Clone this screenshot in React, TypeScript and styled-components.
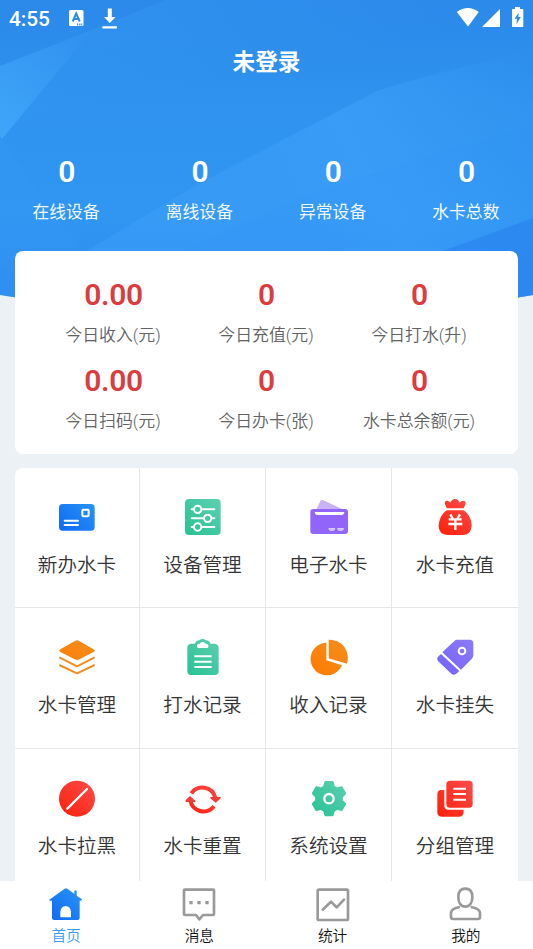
import React from 'react';
import styled, { createGlobalStyle } from 'styled-components';

const GlobalStyle = createGlobalStyle`
  * { box-sizing: border-box; }
  body {
    margin: 0;
    background: #ecf1f5;
    font-family: Roboto, 'Noto Sans CJK SC', sans-serif;
    overflow: hidden;
  }
  svg { display: block; }
`;

const Screen = styled.div`
  position: relative;
  isolation: isolate;
  display: flex;
  flex-direction: column;
  width: 100%;
  height: 949px;
  overflow: hidden;
`;

const HeroArt = styled.svg`
  position: absolute;
  inset: 0 0 auto 0;
  z-index: -1;
  width: 100%;
  height: 310px;
`;

const StatusBar = styled.div`
  display: flex;
  align-items: center;
  flex: none;
  height: 37px;
  padding: 0 9px;
  color: #fff;
`;

const Clock = styled.span`
  width: 60px;
  font-size: 20.8px;
  font-weight: 500;
`;

const StatusGroup = styled.div<{ $end?: boolean }>`
  display: flex;
  margin-left: ${(p) => (p.$end ? 'auto' : '0')};
`;

const Title = styled.h1`
  flex: none;
  margin: 0;
  height: 50px;
  line-height: 52px;
  text-align: center;
  font-size: 22.6px;
  font-weight: 600;
  color: #fff;
`;

const Summary = styled.div`
  display: grid;
  grid-template-columns: repeat(4, 1fr);
  flex: none;
  height: 164px;
  padding-top: 66px;
`;

const Stat = styled.div`
  display: flex;
  flex-direction: column;
  align-items: center;
`;

const StatValue = styled.strong<{ $red?: boolean }>`
  height: 38px;
  line-height: 38px;
  font-size: 30px;
  font-weight: 600;
  letter-spacing: -0.3px;
  color: ${(p) => (p.$red ? '#dc3c3e' : '#fff')};
`;

const StatLabel = styled.span<{ $dark?: boolean }>`
  height: 40px;
  padding-right: 1px;
  line-height: 42px;
  font-size: ${(p) => (p.$dark ? '16.9px' : '16.8px')};
  white-space: nowrap;
  font-weight: ${(p) => (p.$dark ? 350 : 400)};
  color: ${(p) => (p.$dark ? '#626262' : '#f2f8ff')};
`;

const TodayCard = styled.section`
  display: grid;
  grid-template-columns: repeat(3, 153px);
  grid-auto-rows: 86px;
  justify-content: center;
  flex: none;
  height: 203px;
  margin: 0 15px;
  padding-top: 25px;
  border-radius: 8px;
  background: #fff;
`;

const Menu = styled.section`
  display: grid;
  grid-template-columns: 125px 126px 126px 126px;
  grid-auto-rows: 140.3px;
  flex: 1;
  min-height: 0;
  margin: 14px 15px 0;
  border-radius: 8px 8px 0 0;
  background: #fff;
  overflow: hidden;
`;

const MenuItem = styled.div`
  display: flex;
  flex-direction: column;
  align-items: center;
  gap: 15px;
  padding-top: 31px;
  border-right: 1px solid #e6e6e6;
  border-bottom: 1px solid #e6e6e6;
  font-size: 19.6px;
  line-height: 32px;
  font-weight: 350;
  color: #333;
  &:nth-child(4n) { border-right: 0; }
`;

const Glyph = styled.svg`
  width: 36px;
  height: 36px;
  overflow: visible;
`;

const TabBar = styled.nav`
  display: grid;
  grid-template-columns: repeat(4, 1fr);
  flex: none;
  height: 68px;
  background: #fff;
`;

const Tab = styled.div<{ $active?: boolean }>`
  display: flex;
  flex-direction: column;
  align-items: center;
  padding: 6px 1px 0 0;
  font-size: 14.7px;
  line-height: 24px;
  font-weight: 350;
  color: ${(p) => (p.$active ? '#3b9bf5' : '#111')};
`;

const TabGlyph = styled.svg`
  width: 36px;
  height: 37px;
`;

const gear = (() => {
  const pts: string[] = [];
  for (let i = 0; i < 6; i++) {
    const base = (i * 60 - 90) * (Math.PI / 180);
    [[-0.37, 38], [-0.2, 50], [0.2, 50], [0.37, 38]].forEach(([a, r]) => {
      pts.push(`${54 + r * Math.cos(base + a)},${56 + r * Math.sin(base + a)}`);
    });
  }
  return pts.join(' ');
})();

const menu: { label: string; icon: React.ReactNode }[] = [
  {
    label: '新办水卡',
    icon: (
      <>
        <rect x="0" y="15" width="107" height="80" rx="11" fill="url(#blue)" />
        <g fill="none" stroke="#fff" strokeWidth="6" strokeLinecap="round">
          <rect x="70" y="32" width="19" height="20" rx="3" />
          <path d="M17 65H57M17 78H57" />
        </g>
      </>
    ),
  },
  {
    label: '设备管理',
    icon: (
      <>
        <rect x="0" y="0" width="107" height="108" rx="12" fill="url(#green)" />
        <g fill="none" stroke="#fff" strokeWidth="6" strokeLinecap="round">
          <path d="M20 31H26M50 31H88M20 58H56M80 58H88M20 84H26M50 84H88" />
          <circle cx="38" cy="31" r="11" />
          <circle cx="68" cy="58" r="11" />
          <circle cx="38" cy="84" r="11" />
        </g>
      </>
    ),
  },
  {
    label: '电子水卡',
    icon: (
      <>
        <path d="M16 32L28 6Q31 1 37 4L98 32Z" fill="#c9b2fb" />
        <rect x="-2" y="30" width="113" height="75" rx="9" fill="#9165fa" />
        <path d="M11 39H100Q99 48 92 48H19Q12 48 11 39Z" fill="#fff" />
        <path d="M52 87H73Q72 96 67 96H58Q53 96 52 87ZM78 87H99Q98 96 93 96H84Q79 96 78 87Z" fill="#d5c4ff" />
      </>
    ),
  },
  {
    label: '水卡充值',
    icon: (
      <>
        <path d="M29 28L23 12Q24 4 32 5Q37 7 40 11Q44 1 54 0Q64 1 68 11Q72 5 79 5Q87 6 86 14L80 28Z" fill="url(#red)" />
        <path d="M30 34H79C95 44 103 60 104 80Q102 107 77 108H32Q6 107 5 82C6 61 14 44 30 34Z" fill="url(#red)" />
        <path d="M40 46L48 60M69 46L61 60M35 61H74M34 75H76M55 60V93" fill="none" stroke="#fff" strokeWidth="7" />
      </>
    ),
  },
  {
    label: '水卡管理',
    icon: (
      <>
        <path d="M49 5Q54 2 59 5L104 31Q110 35 104 39L61 61Q54 65 47 61L4 39Q-2 35 4 31Z" fill="url(#orange)" />
        <path d="M1 55L54 82L107 55M1 78L54 103L107 78" fill="none" stroke="#f28c22" strokeWidth="6" strokeLinejoin="round" />
      </>
    ),
  },
  {
    label: '打水记录',
    icon: (
      <>
        <path d="M18 14H30Q33 4 43 4Q53-4 63 4Q73 4 76 14H89Q101 15 101 27V96Q101 108 89 108H18Q7 108 7 96V26Q7 15 18 14Z" fill="url(#green)" />
        <path d="M39 27Q34 26 36 18Q37 14 44 14Q53 3 62 14Q69 14 70 19Q72 26 67 27Z" fill="#fff" />
        <path d="M28 52H80M28 68H80M28 84H80" stroke="#fff" strokeWidth="6" />
      </>
    ),
  },
  {
    label: '收入记录',
    icon: (
      <>
        <path d="M46 11A49 49 0 1 0 93 79L46 64Z" fill="url(#orange)" />
        <path d="M53 2A55 55 0 0 1 108 74L53 58Z" fill="url(#orange)" />
      </>
    ),
  },
  {
    label: '水卡挂失',
    icon: (
      <>
        <path d="M60 2H98Q109 2 109 13V49Q109 54 104 60L72 92L16 40L53 5Q56 2 60 2Z" fill="url(#violet)" />
        <path d="M12 45L67 96L57 105Q49 110 43 104L3 66Q-2 59 3 53Z" fill="url(#violet)" />
        <circle cx="75" cy="36" r="10" fill="none" stroke="#fff" strokeWidth="6" />
      </>
    ),
  },
  {
    label: '水卡拉黑',
    icon: (
      <>
        <circle cx="54" cy="56" r="54" fill="url(#red)" />
        <path d="M25 86L84 27" stroke="#fff" strokeWidth="7" strokeLinecap="round" />
      </>
    ),
  },
  {
    label: '水卡重置',
    icon: (
      <>
        <g fill="none" stroke="url(#red)" strokeWidth="12">
          <path d="M19 40A40 40 0 0 1 91 54" />
          <path d="M87 79A40 40 0 0 1 16 60" />
        </g>
        <path d="M76 51H107Q109 54 105 57L92 68L76 55ZM15 48L31 62V66H3Q-1 63 3 59Z" fill="#f43c35" />
      </>
    ),
  },
  {
    label: '系统设置',
    icon: (
      <>
        <polygon points={gear} fill="url(#green)" stroke="url(#green)" strokeWidth="8" strokeLinejoin="round" />
        <circle cx="54" cy="56" r="14" fill="none" stroke="#fff" strokeWidth="7" />
      </>
    ),
  },
  {
    label: '分组管理',
    icon: (
      <>
        <path d="M12 30H22V78Q23 89 34 89H80Q82 109 67 110H14Q1 110 1 97V42Q2 30 12 30Z" fill="url(#red)" />
        <rect x="28" y="2" width="79" height="81" rx="11" fill="url(#red)" />
        <path d="M49 26H87M49 42H87M49 59H87" stroke="#fff" strokeWidth="6" />
      </>
    ),
  },
];

const tabs: { label: string; icon: React.ReactNode }[] = [
  {
    label: '首页',
    icon: (
      <path
        fillRule="evenodd"
        fill="url(#blue)"
        d="M4 36L50 3Q54 0 58 3L79 18V11Q83 5 86 9V24L102 35Q104 39 97 39H95V91Q95 97 89 97H19Q12 97 12 91V39H7Q2 39 4 36ZM37 89H69V72Q67 56 53 55Q39 56 37 72Z"
      />
    ),
  },
  {
    label: '消息',
    icon: (
      <>
        <path d="M12 6H96Q99 6 99 9V79Q99 82 96 82H66L55 95L45 82H12Q9 82 9 79V9Q9 6 12 6Z" fill="none" stroke="#999" strokeWidth="8" strokeLinejoin="round" />
        <path d="M25 40H35V50H25ZM49 40H59V50H49ZM73 40H83V50H73Z" fill="#999" />
      </>
    ),
  },
  {
    label: '统计',
    icon: (
      <g fill="none" stroke="#999" strokeWidth="8" strokeLinejoin="round">
        <rect x="8" y="6" width="91" height="91" rx="4" />
        <path d="M23 66L48 42L65 59L87 36" strokeLinecap="round" />
      </g>
    ),
  },
  {
    label: '我的',
    icon: (
      <g fill="none" stroke="#999" strokeWidth="8" strokeLinejoin="round">
        <path d="M52 3C66 3 73 13 73 28C73 45 65 57 52 57C39 57 31 45 31 28C31 13 38 3 52 3Z" />
        <path d="M36 58C23 60 10 64 9 75V88Q9 94 16 94H89Q96 94 96 88V75C95 64 82 60 68 58" />
      </g>
    ),
  },
];

const summary = ['在线设备', '离线设备', '异常设备', '水卡总数'];
const today = [
  ['0.00', '今日收入(元)'],
  ['0', '今日充值(元)'],
  ['0', '今日打水(升)'],
  ['0.00', '今日扫码(元)'],
  ['0', '今日办卡(张)'],
  ['0', '水卡总余额(元)'],
];

const gradients: [string, string, string][] = [
  ['blue', '#2795f2', '#1068f8'],
  ['green', '#5acfaf', '#2bc295'],
  ['red', '#fd4a49', '#fc220c'],
  ['orange', '#f48d1e', '#ff7c00'],
  ['violet', '#8b78f8', '#7464fa'],
];

function Backdrop() {
  return (
    <HeroArt viewBox="0 0 533 310" preserveAspectRatio="none">
      <defs>
        <linearGradient id="sky" x1="0" y1="0" x2="0" y2="1">
          <stop offset="0" stopColor="#2b89e9" />
          <stop offset=".35" stopColor="#2f93ef" />
          <stop offset=".7" stopColor="#3096f2" />
          <stop offset="1" stopColor="#2e89ee" />
        </linearGradient>
        <linearGradient id="beam" gradientUnits="userSpaceOnUse" x1="533" y1="60" x2="280" y2="190">
          <stop offset="0" stopColor="#41a4fc" stopOpacity="0" />
          <stop offset=".7" stopColor="#41a4fc" stopOpacity=".55" />
          <stop offset="1" stopColor="#41a2fc" stopOpacity=".4" />
        </linearGradient>
        <linearGradient id="flare" gradientUnits="userSpaceOnUse" x1="0" y1="125" x2="80" y2="40">
          <stop offset="0" stopColor="#48b0ff" stopOpacity=".6" />
          <stop offset="1" stopColor="#48a8ff" stopOpacity=".08" />
        </linearGradient>
        <linearGradient id="sheen" gradientUnits="userSpaceOnUse" x1="90" y1="30" x2="110" y2="110">
          <stop offset="0" stopColor="#3aa0f8" stopOpacity=".25" />
          <stop offset="1" stopColor="#3aa0f8" stopOpacity="0" />
        </linearGradient>
        <clipPath id="heroShape">
          <path d="M0 0H533V295Q267 340 0 295Z" />
        </clipPath>
        {gradients.map(([id, from, to]) => (
          <linearGradient key={id} id={id} gradientUnits="userSpaceOnUse" x1="100" y1="5" x2="8" y2="102">
            <stop offset="0" stopColor={from} />
            <stop offset="1" stopColor={to} />
          </linearGradient>
        ))}
      </defs>
      <g clipPath="url(#heroShape)">
        <rect width="533" height="310" fill="url(#sky)" />
        <path d="M0 66L92 30L165 0H533V120H0Z" fill="url(#sheen)" />
        <path d="M0 66L92 30L2 139L0 136Z" fill="url(#flare)" />
        <path d="M2 139L45 204L85 252L0 310V139Z" fill="#3da4fb" opacity=".12" />
        <path d="M85 252L200 183L375 92Q400 82 533 50V310H0Z" fill="url(#beam)" />
        <path d="M180 252L320 190L533 124V310H80Z" fill="#2f90f6" opacity=".14" />
        <path d="M440 252L533 218V310H300Z" fill="#2379e8" opacity=".45" />
      </g>
    </HeroArt>
  );
}

export default function App() {
  return (
    <Screen>
      <GlobalStyle />
      <Backdrop />
      <StatusBar>
        <Clock>4:55</Clock>
        <StatusGroup>
          <svg width="50" height="37" viewBox="0 0 50 37" fill="#fff">
            <rect x="0" y="10" width="14.5" height="16" rx="1.5" />
            <path d="M3.7 21.5L7.2 13.5L10.7 21.5M5 19H9.4" fill="none" stroke="#2c8aea" strokeWidth="2" />
            <path d="M8 23.5H9.2V25.5H8ZM10.2 23.5H11.4V25.5H10.2ZM12.2 23.5H13.2V25.5H12.2Z" fill="#2c8aea" />
            <path d="M37.2 8.5H41.2V17H45L39.2 23L33.4 17H37.2ZM31.8 26.2H46.3V28.4H31.8Z" transform="translate(1.6 0)" />
          </svg>
        </StatusGroup>
        <StatusGroup $end>
          <svg width="68" height="37" viewBox="0 0 68 37" fill="#fff">
            <path d="M.8 12Q12 4 22.8 12L12 26.5ZM26 27L44 9V27Z" />
            <path fillRule="evenodd" d="M57 9H59V7H64V9H66.3Q67.3 9 67.3 10V27H56V10Q56 9 57 9ZM62.7 12.5L58.6 18.7H61L60.4 24.2L64.8 17H62.3Z" />
          </svg>
        </StatusGroup>
      </StatusBar>
      <Title>未登录</Title>
      <Summary>
        {summary.map((label) => (
          <Stat key={label}>
            <StatValue>0</StatValue>
            <StatLabel>{label}</StatLabel>
          </Stat>
        ))}
      </Summary>
      <TodayCard>
        {today.map(([value, label]) => (
          <Stat key={label}>
            <StatValue $red>{value}</StatValue>
            <StatLabel $dark>{label}</StatLabel>
          </Stat>
        ))}
      </TodayCard>
      <Menu>
        {menu.map(({ label, icon }) => (
          <MenuItem key={label}>
            <Glyph viewBox="0 0 108 108">{icon}</Glyph>
            {label}
          </MenuItem>
        ))}
      </Menu>
      <TabBar>
        {tabs.map(({ label, icon }, i) => (
          <Tab key={label} $active={i === 0}>
            <TabGlyph viewBox="0 -2 108 111">{icon}</TabGlyph>
            {label}
          </Tab>
        ))}
      </TabBar>
    </Screen>
  );
}
